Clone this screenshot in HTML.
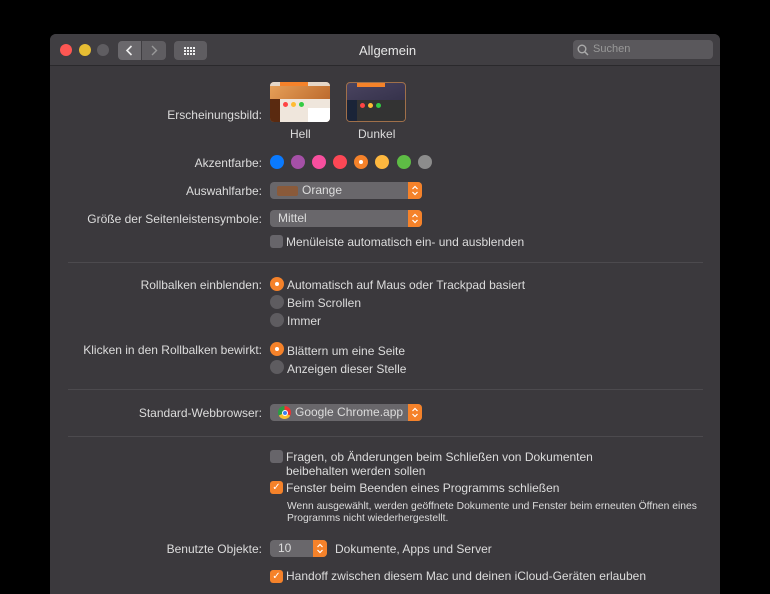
<!DOCTYPE html>
<html><head><meta charset="utf-8"><style>
*{margin:0;padding:0;box-sizing:border-box}
body{width:770px;height:578px;background:#000;font-family:"Liberation Sans",sans-serif;font-size:12px;color:#dcdcdc;position:relative;overflow:hidden}
.win{position:absolute;left:50px;top:34px;width:670px;height:560px;background:#3b393d;border-radius:6px 6px 0 0;overflow:hidden}
.tb{position:absolute;left:0;top:0;width:670px;height:32px;background:#403e42;border-bottom:1px solid #2a292c}
.a{position:absolute;white-space:nowrap}
.lbl{position:absolute;right:458px;white-space:nowrap;text-align:right}
.dot{position:absolute;width:12px;height:12px;border-radius:50%}
.c{position:absolute;width:14px;height:14px;border-radius:50%}
.pop{position:absolute;height:17px;background:#69676b;border-radius:4px;overflow:hidden}
.pop .ar{position:absolute;right:0;top:0;width:14px;height:17px;background:#f5822a}
.pop span{position:absolute;left:8px;top:1px}
.cb{position:absolute;width:13px;height:13px;border-radius:3px;background:#67656a}
.cb.on{background:#f5822a;color:#fff;font-size:10px;line-height:13px;text-align:center}
.rb{position:absolute;width:14px;height:14px;border-radius:50%;background:#5e5c60}
.rb.on{background:#f5822a}
.rb.on::after{content:"";position:absolute;left:5px;top:5px;width:4px;height:4px;border-radius:50%;background:#fff}
.sep{position:absolute;left:18px;width:635px;height:1px;background:#4c4a4e}
</style></head><body>
<svg width="0" height="0" style="position:absolute"><defs><symbol id="ud" viewBox="0 0 14 17"><path d="M4.5 7 L7 4.5 L9.5 7 M4.5 10 L7 12.5 L9.5 10" stroke="#fff" stroke-width="1.2" fill="none"/></symbol></defs></svg>
<div class="win">
<div class="tb">
<div class="dot" style="left:10px;top:10px;background:#fd5753"></div>
<div class="dot" style="left:29px;top:10px;background:#e6bd33"></div>
<div class="dot" style="left:47px;top:10px;background:#5f5d61"></div>
<div class="a" style="left:68px;top:7px;width:23px;height:19px;background:#6a686c;border-radius:4px 0 0 4px"><svg width="23" height="19"><path d="M13.5 5 L9 9.5 L13.5 14" stroke="#eee" stroke-width="1.6" fill="none"/></svg></div>
<div class="a" style="left:92px;top:7px;width:24px;height:19px;background:#5f5d61;border-radius:0 4px 4px 0"><svg width="24" height="19"><path d="M10 5 L14.5 9.5 L10 14" stroke="#999" stroke-width="1.4" fill="none"/></svg></div>
<div class="a" style="left:124px;top:7px;width:33px;height:19px;background:#5f5d61;border-radius:4px"><svg width="33" height="19" fill="#eee"><g><rect x="10" y="6" width="2" height="2"/><rect x="13" y="6" width="2" height="2"/><rect x="16" y="6" width="2" height="2"/><rect x="19" y="6" width="2" height="2"/><rect x="10" y="9" width="2" height="2"/><rect x="13" y="9" width="2" height="2"/><rect x="16" y="9" width="2" height="2"/><rect x="19" y="9" width="2" height="2"/><rect x="10" y="12" width="2" height="2"/><rect x="13" y="12" width="2" height="2"/><rect x="16" y="12" width="2" height="2"/><rect x="19" y="12" width="2" height="2"/></g></svg></div>
<div class="a" style="left:309px;top:9px;font-size:13px;color:#e6e6e6">Allgemein</div>
<div class="a" style="left:523px;top:6px;width:140px;height:19px;background:#5a585c;border-radius:4px;color:#999;font-size:11px;line-height:19px;padding-left:20px">Suchen</div>
<svg class="a" style="left:527px;top:10px" width="12" height="12"><circle cx="5" cy="5" r="3.8" stroke="#aaa" stroke-width="1.4" fill="none"/><line x1="8" y1="8" x2="11" y2="11" stroke="#aaa" stroke-width="1.5"/></svg>
</div>

<div class="lbl" style="top:74px">Erscheinungsbild:</div>
<div class="a" style="left:220px;top:48px;width:60px;height:40px;border-radius:4px;overflow:hidden;background:linear-gradient(135deg,#e8a25a,#b05a20)">
<div class="a" style="left:0;top:0;width:60px;height:4px;background:#e5d7c8"></div>
<div class="a" style="left:10px;top:0;width:28px;height:4px;background:#f5822a"></div>
<div class="a" style="left:10px;top:17px;width:50px;height:23px;background:#efe6dc"></div>
<div class="a" style="left:0;top:17px;width:10px;height:23px;background:#5a2a10"></div>
<div class="a" style="left:38px;top:26px;width:22px;height:14px;background:#fff"></div>
<div class="a" style="left:13px;top:20px;width:5px;height:5px;border-radius:50%;background:#f44"></div>
<div class="a" style="left:21px;top:20px;width:5px;height:5px;border-radius:50%;background:#fb3"></div>
<div class="a" style="left:29px;top:20px;width:5px;height:5px;border-radius:50%;background:#3c4"></div>
</div>
<div class="a" style="left:296px;top:48px;width:60px;height:40px;border-radius:4px;overflow:hidden;border:1px solid #a0704a;background:linear-gradient(160deg,#4a4460,#2a2840)">
<div class="a" style="left:10px;top:0;width:28px;height:4px;background:#f5822a"></div>
<div class="a" style="left:10px;top:17px;width:50px;height:23px;background:#333"></div>
<div class="a" style="left:0;top:17px;width:10px;height:23px;background:#1a2438"></div>
<div class="a" style="left:13px;top:20px;width:5px;height:5px;border-radius:50%;background:#f44"></div>
<div class="a" style="left:21px;top:20px;width:5px;height:5px;border-radius:50%;background:#fb3"></div>
<div class="a" style="left:29px;top:20px;width:5px;height:5px;border-radius:50%;background:#3c4"></div>
</div>
<div class="a" style="left:240px;top:93px">Hell</div>
<div class="a" style="left:308px;top:93px">Dunkel</div>

<div class="lbl" style="top:122px">Akzentfarbe:</div>
<div class="c" style="left:220px;top:121px;background:#0a7aff"></div>
<div class="c" style="left:241px;top:121px;background:#a550a7"></div>
<div class="c" style="left:262px;top:121px;background:#f74f9e"></div>
<div class="c" style="left:283px;top:121px;background:#fc4755"></div>
<div class="c" style="left:304px;top:121px;background:#f5822a"><div class="a" style="left:5px;top:5px;width:4px;height:4px;border-radius:50%;background:#fff"></div></div>
<div class="c" style="left:325px;top:121px;background:#feb83f"></div>
<div class="c" style="left:347px;top:121px;background:#5ebc45"></div>
<div class="c" style="left:368px;top:121px;background:#8c8c8c"></div>

<div class="lbl" style="top:150px">Auswahlfarbe:</div>
<div class="pop" style="left:220px;top:148px;width:152px"><div class="a" style="left:7px;top:4px;width:21px;height:10px;background:#8a5a3a;border-radius:2px"></div><span style="left:32px">Orange</span><svg class="ar"><use href="#ud"/></svg></div>
<div class="lbl" style="top:178px">Größe der Seitenleistensymbole:</div>
<div class="pop" style="left:220px;top:176px;width:152px"><span>Mittel</span><svg class="ar"><use href="#ud"/></svg></div>
<div class="cb" style="left:220px;top:201px"></div>
<div class="a" style="left:236px;top:201px">Menüleiste automatisch ein- und ausblenden</div>
<div class="sep" style="top:228px"></div>

<div class="lbl" style="top:244px">Rollbalken einblenden:</div>
<div class="rb on" style="left:220px;top:243px"></div><div class="a" style="left:237px;top:244px">Automatisch auf Maus oder Trackpad basiert</div>
<div class="rb" style="left:220px;top:261px"></div><div class="a" style="left:237px;top:262px">Beim Scrollen</div>
<div class="rb" style="left:220px;top:279px"></div><div class="a" style="left:237px;top:280px">Immer</div>
<div class="lbl" style="top:309px">Klicken in den Rollbalken bewirkt:</div>
<div class="rb on" style="left:220px;top:308px"></div><div class="a" style="left:237px;top:310px">Blättern um eine Seite</div>
<div class="rb" style="left:220px;top:326px"></div><div class="a" style="left:237px;top:328px">Anzeigen dieser Stelle</div>
<div class="sep" style="top:355px"></div>

<div class="lbl" style="top:372px">Standard-Webbrowser:</div>
<div class="pop" style="left:220px;top:370px;width:152px"><div class="a" style="left:8px;top:2px;width:13px;height:13px;border-radius:50%;background:conic-gradient(#e33 0 120deg,#fbc02d 120deg 240deg,#2a9d44 240deg)"><div class="a" style="left:3.5px;top:3.5px;width:6px;height:6px;border-radius:50%;background:#3b7ff0;border:1px solid #fff"></div></div><span style="left:25px">Google Chrome.app</span><svg class="ar"><use href="#ud"/></svg></div>
<div class="sep" style="top:402px"></div>

<div class="cb" style="left:220px;top:416px"></div>
<div class="a" style="left:236px;top:416px;line-height:14px">Fragen, ob Änderungen beim Schließen von Dokumenten<br>beibehalten werden sollen</div>
<div class="cb on" style="left:220px;top:447px">✓</div>
<div class="a" style="left:236px;top:447px">Fenster beim Beenden eines Programms schließen</div>
<div class="a" style="left:237px;top:467px;font-size:10.3px;line-height:12px">Wenn ausgewählt, werden geöffnete Dokumente und Fenster beim erneuten Öffnen eines<br>Programms nicht wiederhergestellt.</div>
<div class="lbl" style="top:508px">Benutzte Objekte:</div>
<div class="pop" style="left:220px;top:506px;width:57px"><span>10</span><svg class="ar"><use href="#ud"/></svg></div>
<div class="a" style="left:285px;top:508px">Dokumente, Apps und Server</div>
<div class="cb on" style="left:220px;top:536px">✓</div>
<div class="a" style="left:236px;top:535px">Handoff zwischen diesem Mac und deinen iCloud-Geräten erlauben</div>
</div>
</body></html>
